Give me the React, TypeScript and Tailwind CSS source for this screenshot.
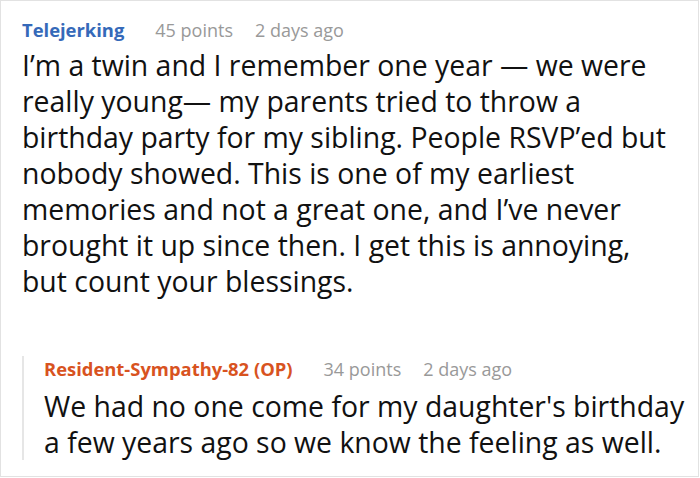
export default function App() {
  return (
    <div className="h-[478px] w-[700px] bg-white font-['Open_Sans','Noto_Sans',sans-serif]">
      <div className="h-[477px] w-[699px] border border-[#e2e2e2] bg-white pl-[21px] pr-3 pt-[16px]">
        {/* top-level comment */}
        <div className="flex items-baseline gap-[31px] text-[18px] leading-[26px]">
          <span className="text-[18.4px] font-bold text-[#3569b9]">Telejerking</span>
          <span className="flex gap-[22px] text-[#999999]">
            <span>45 points</span>
            <span>2 days ago</span>
          </span>
        </div>
        <p className="mt-[4px] pr-[11px] text-[28.4px] leading-[36px] text-[#111111]">
          I’m a twin and I remember one year — we were really young— my parents tried to throw a
          birthday party for my sibling. People RSVP’ed but nobody showed. This is one of my
          earliest memories and not a great one, and I’ve never brought it up since then. I get
          this is annoying, but count your blessings.
        </p>

        {/* reply */}
        <div className="mt-[69px] border-l-2 border-[#e6e6e6] pl-[20px]">
          <div className="-mt-[12px] flex items-baseline gap-[31px] text-[18px] leading-[26px]">
            <span className="text-[18.4px] font-bold text-[#d8531f]">Resident-Sympathy-82 (OP)</span>
            <span className="flex gap-[22px] text-[#999999]">
              <span>34 points</span>
              <span>2 days ago</span>
            </span>
          </div>
          <p className="mt-[6px] text-[28.4px] leading-[36px] text-[#111111]">
            We had no one come for my daughter's birthday a few years ago so we know the feeling
            as well.
          </p>
        </div>
      </div>
    </div>
  );
}
